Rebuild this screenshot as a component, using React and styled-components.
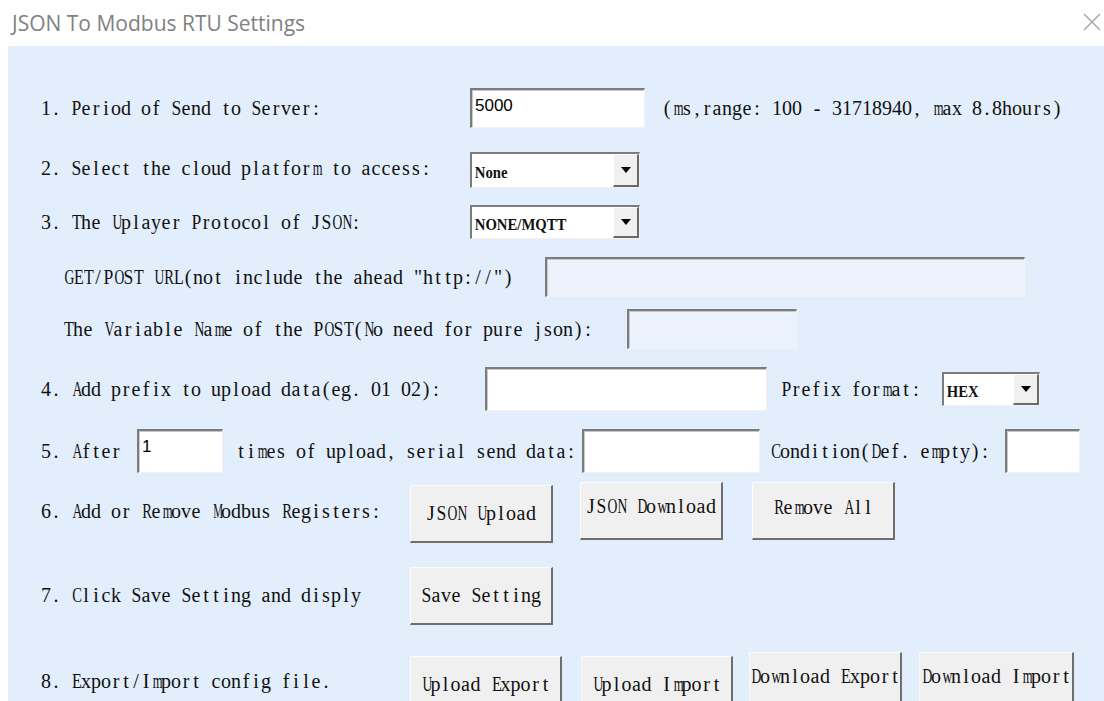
import React from 'react';
import styled, { createGlobalStyle } from 'styled-components';

const GlobalStyle = createGlobalStyle`
    html, body {
        margin: 0;
        padding: 0;
        background: #fff;
        overflow: hidden;
    }
`;

// advance widths (em) of the wider Times glyphs; everything else fits a half-em cell
const WIDE = {
    A: .722, B: .667, C: .667, D: .722, E: .611, F: .556, G: .722, H: .722, K: .722,
    L: .611, M: .889, N: .722, O: .722, P: .556, Q: .722, R: .667, S: .556, T: .611,
    U: .722, V: .722, W: .944, X: .722, Y: .722, Z: .611, m: .778, w: .722,
};

const fit = (c) => (WIDE[c] ? Math.min(1, 0.49 / WIDE[c]) : 1);

const Dialog = styled.div`
    width: 1104px;
    height: 701px;
    display: flex;
    flex-direction: column;
    background: #fff;
    overflow: hidden;
`;

const TitleBar = styled.div`
    height: 46px;
    flex-shrink: 0;
    display: flex;
    align-items: center;
    justify-content: space-between;
    padding: 0 3px 0 12px;
    font-family: "Open Sans", "Noto Sans", sans-serif;
    font-size: 21px;
    color: #818181;
`;

const CloseIcon = styled.svg`
    width: 18px;
    height: 18px;
    margin-bottom: 2px;
`;

const Panel = styled.div`
    flex: 1;
    margin-left: 8px;
    background: #e2eefb;
    padding: 0 0 0 33px;
    font-family: "Liberation Serif", "Times New Roman", serif;
    font-size: 20px;
    color: #111;
`;

const Row = styled.div`
    display: flex;
    align-items: center;
    height: ${p => p.$h || 44}px;
    margin-top: ${p => p.$mt}px;
    margin-left: ${p => p.$indent || 0}px;
`;

const Label = styled.span`
    flex-shrink: 0;
    width: ${p => (p.$w ? `${p.$w}px` : 'auto')};
    margin-left: ${p => p.$ml || 0}px;
    white-space: pre;
`;

// one fixed-width cell per character, like the dialog's half-width system font
const Cell = styled.span`
    display: inline-block;
    width: 10px;
    text-align: center;
    white-space: pre;
    transform: ${p => (p.$sx < 1 ? `scaleX(${p.$sx.toFixed(2)})` : 'none')};
`;

const Mono = ({ text }) => (
    <>
        {[...text].map((c, i) => (
            <Cell key={i} $sx={fit(c)}>{c}</Cell>
        ))}
    </>
);

const TextBox = styled.div`
    box-sizing: border-box;
    flex-shrink: 0;
    width: ${p => p.$w}px;
    height: ${p => p.$h || 44}px;
    background: ${p => (p.$dim ? '#ecf3fc' : '#fff')};
    border-top: 2px solid #7c7c7c;
    border-left: 2px solid #7c7c7c;
    border-right: 1px solid #f2f2f2;
    border-bottom: 1px solid #f2f2f2;
    box-shadow: inset 1px 1px 0 #c9c9c9;
    padding: 7px 3px;
    font-family: "Liberation Sans", Arial, sans-serif;
    font-size: 17px;
    line-height: 1;
    color: #000;
`;

const Select = styled.div`
    box-sizing: border-box;
    flex-shrink: 0;
    display: flex;
    align-items: stretch;
    width: ${p => p.$w}px;
    height: ${p => p.$h || 36}px;
    margin-top: ${p => (p.$dy || 0) * 2}px;
    background: #fff;
    border-top: 2px solid #7c7c7c;
    border-left: 2px solid #7c7c7c;
    border-right: 1px solid #f2f2f2;
    border-bottom: 1px solid #f2f2f2;
`;

const SelectValue = styled.span`
    flex: 1;
    display: flex;
    align-items: center;
    padding: 4px 0 0 3px;
    font-family: "Liberation Serif", serif;
    font-weight: bold;
    font-size: 16px;
    transform: scaleX(0.92);
    transform-origin: left center;
`;

const SelectArrow = styled.span`
    box-sizing: border-box;
    width: 26px;
    display: flex;
    align-items: center;
    justify-content: center;
    background: #f0f0f0;
    border-top: 1px solid #fff;
    border-left: 1px solid #fff;
    border-right: 2px solid #6a6a6a;
    border-bottom: 2px solid #6a6a6a;

    &::after {
        content: "";
        border-left: 5px solid transparent;
        border-right: 5px solid transparent;
        border-top: 6px solid #000;
    }
`;

const Button = styled.button`
    box-sizing: border-box;
    flex-shrink: 0;
    width: ${p => p.$w}px;
    height: ${p => p.$h || 58}px;
    margin-left: ${p => p.$ml || 0}px;
    margin-top: ${p => (p.$dy || 0) * 2}px;
    padding: 0;
    padding-bottom: ${p => p.$lift || 0}px;
    background: #f0f0f0;
    border-top: 1px solid #fbfbfb;
    border-left: 1px solid #fbfbfb;
    border-right: 2px solid #6e6e6e;
    border-bottom: 2px solid #6e6e6e;
    font-family: "Liberation Serif", "Times New Roman", serif;
    font-size: 20px;
    color: #111;
    white-space: pre;
`;

const Dropdown = ({ value, w, h, dy }) => (
    <Select $w={w} $h={h} $dy={dy}>
        <SelectValue>{value}</SelectValue>
        <SelectArrow />
    </Select>
);

const App = () => {
    return (
        <Dialog>
            <GlobalStyle />
            <TitleBar>
                JSON To Modbus RTU Settings
                <CloseIcon viewBox="0 0 18 18">
                    <path d="M1 1 L17 17 M17 1 L1 17" stroke="#a0a0a0" strokeWidth="1.3" fill="none" />
                </CloseIcon>
            </TitleBar>

            <Panel>
                <Row $mt={40}>
                    <Label $w={429}><Mono text="1. Period of Send to Server:" /></Label>
                    <TextBox $w={175} $h={40}>5000</TextBox>
                    <Label $ml={17}><Mono text="(ms,range: 100 - 31718940, max 8.8hours)" /></Label>
                </Row>

                <Row $mt={16}>
                    <Label $w={429}><Mono text="2. Select the cloud platform to access:" /></Label>
                    <Dropdown value="None" w={170} dy={2} />
                </Row>

                <Row $mt={14} $h={36}>
                    <Label $w={429}><Mono text="3. The Uplayer Protocol of JSON:" /></Label>
                    <Dropdown value="NONE/MQTT" w={170} h={34} />
                </Row>

                <Row $mt={15} $indent={22}>
                    <Label $w={482}><Mono text={'GET/POST URL(not include the ahead "http://")'} /></Label>
                    <TextBox $w={480} $h={40} $dim />
                </Row>

                <Row $mt={8} $indent={22}>
                    <Label $w={564}><Mono text="The Variable Name of the POST(No need for pure json):" /></Label>
                    <TextBox $w={170} $h={40} $dim />
                </Row>

                <Row $mt={16}>
                    <Label $w={444}><Mono text="4. Add prefix to upload data(eg. 01 02):" /></Label>
                    <TextBox $w={282} $h={44} />
                    <Label $w={161} $ml={14}><Mono text="Prefix format:" /></Label>
                    <Dropdown value="HEX" w={98} h={34} />
                </Row>

                <Row $mt={18}>
                    <Label $w={96}><Mono text="5. After" /></Label>
                    <TextBox $w={86}>1</TextBox>
                    <Label $w={346} $ml={13}><Mono text="times of upload, serial send data:" /></Label>
                    <TextBox $w={178} />
                    <Label $w={235} $ml={10}><Mono text="Condition(Def. empty):" /></Label>
                    <TextBox $w={75} />
                </Row>

                <Row $mt={9} $h={58}>
                    <Label $w={369}><Mono text="6. Add or Remove Modbus Registers:" /></Label>
                    <Button $w={143} $dy={3}><Mono text="JSON Upload" /></Button>
                    <Button $w={143} $ml={27} $lift={8}><Mono text="JSON Download" /></Button>
                    <Button $w={143} $ml={29} $lift={6}><Mono text="Remove All" /></Button>
                </Row>

                <Row $mt={26} $h={58}>
                    <Label $w={369}><Mono text="7. Click Save Setting and disply" /></Label>
                    <Button $w={143} $dy={1}><Mono text="Save Setting" /></Button>
                </Row>

                <Row $mt={28} $h={58}>
                    <Label $w={369}><Mono text="8. Export/Import config file." /></Label>
                    <Button $w={152} $dy={4}><Mono text="Upload Export" /></Button>
                    <Button $w={152} $ml={19} $dy={4}><Mono text="Upload Import" /></Button>
                    <Button $w={153} $ml={16} $lift={8}><Mono text="Download Export" /></Button>
                    <Button $w={155} $ml={17} $lift={8}><Mono text="Download Import" /></Button>
                </Row>
            </Panel>
        </Dialog>
    );
};

export default App;
